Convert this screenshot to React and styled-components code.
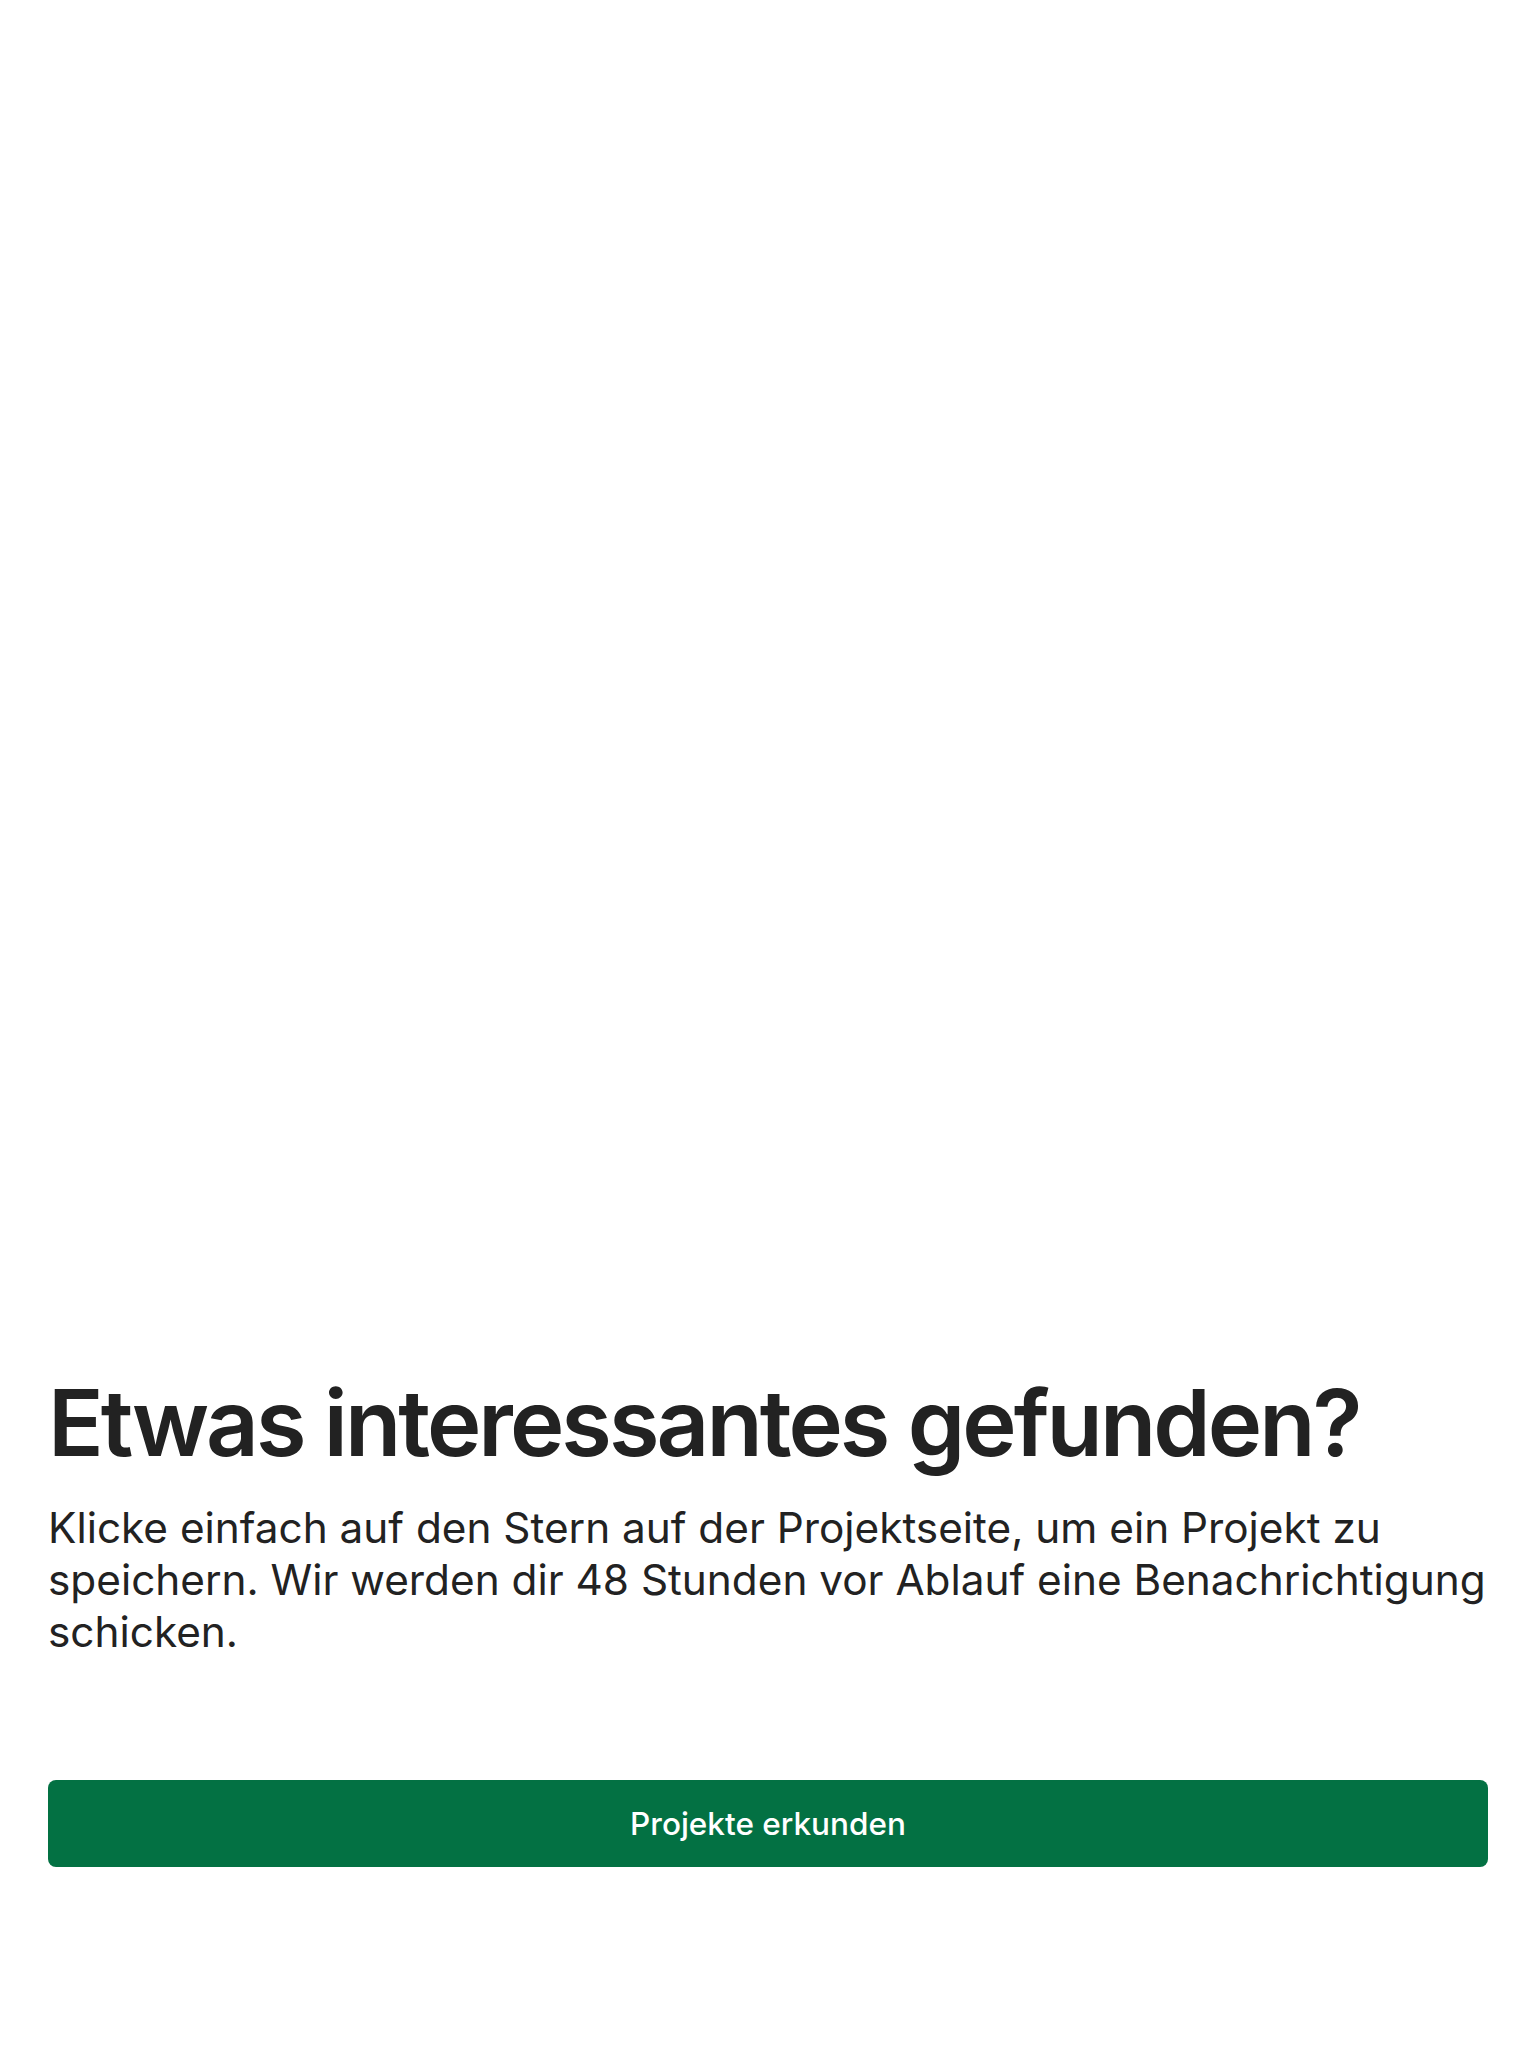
import React from "react";
import styled, { createGlobalStyle } from "styled-components";

const GlobalStyle = createGlobalStyle`
  html, body {
    margin: 0;
    padding: 0;
    background: #ffffff;
  }
  body {
    font-family: Inter, "Noto Sans", "Liberation Sans", sans-serif;
    color: #222222;
  }
`;

const Page = styled.main`
  min-height: 100vh;
  box-sizing: border-box;
  display: flex;
  flex-direction: column;
  justify-content: flex-end;
  padding: 0 48px 181px;
`;

const Title = styled.h1`
  margin: 0;
  font-size: 92px;
  font-weight: 600;
  line-height: 1.2;
  letter-spacing: -0.032em;
  color: #222222;
`;

const Text = styled.p`
  margin: 24px 0 0;
  font-size: 42.3px;
  font-weight: 400;
  line-height: 52px;
  color: #222222;
`;

const Button = styled.button`
  margin-top: 122px;
  width: 100%;
  height: 87px;
  border: none;
  border-radius: 8px;
  background: #037143;
  color: #ffffff;
  font-family: inherit;
  font-size: 31.5px;
  font-weight: 500;
  cursor: pointer;
`;

export default function App() {
  return (
    <>
      <GlobalStyle />
      <Page>
        <Title>Etwas interessantes gefunden?</Title>
        <Text>
          Klicke einfach auf den Stern auf der Projektseite, um ein Projekt zu
          speichern. Wir werden dir 48 Stunden vor Ablauf eine Benachrichtigung
          schicken.
        </Text>
        <Button>Projekte erkunden</Button>
      </Page>
    </>
  );
}
